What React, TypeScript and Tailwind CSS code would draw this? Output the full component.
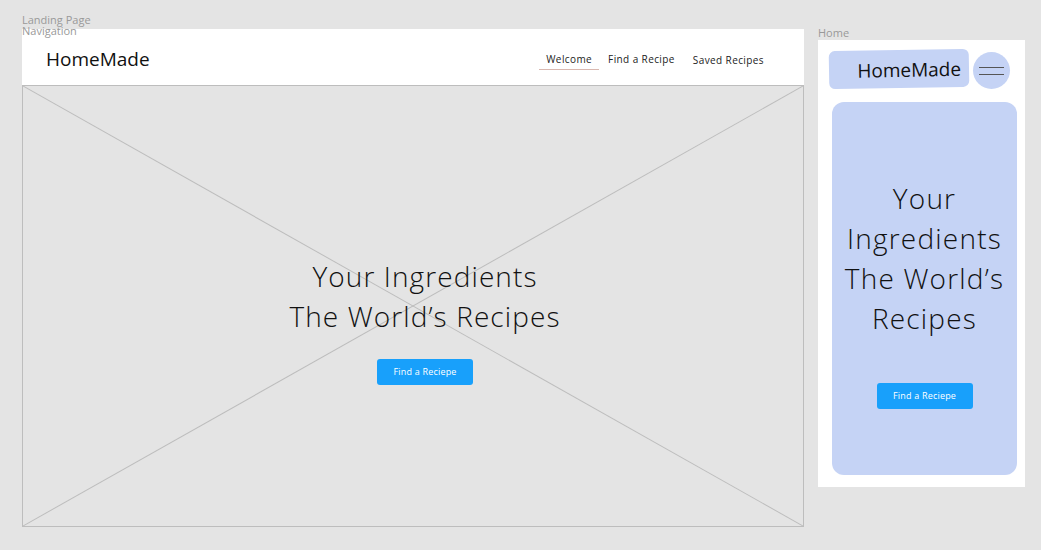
import React from 'react'

const font = { fontFamily: '"Open Sans", "Liberation Sans", sans-serif' }

function FindButton() {
  return (
    <button className="flex h-[26px] w-[96px] items-center justify-center rounded-[3px] bg-[#18a0fb] text-[9px] tracking-[0.2px] text-white">
      Find a Reciepe
    </button>
  )
}

function Desktop() {
  return (
    <div className="flex w-[782px] flex-col">
      <div className="flex h-[56px] items-center justify-between bg-white pl-[24px] pr-[40px]">
        <span className="pt-[4px] text-[19px] text-[#111]">HomeMade</span>
        <nav className="flex items-center text-[10px] tracking-[0.4px] text-[#222]">
          <span className="border-b border-[#d9b8b0] px-[7px] pb-[2px] pt-[7px]">Welcome</span>
          <span className="ml-[9px] pt-[4px]">Find a Recipe</span>
          <span className="ml-[18px] pt-[6px]">Saved Recipes</span>
        </nav>
      </div>
      <div className="relative flex h-[442px] flex-col items-center border border-[#bdbdbd] bg-[#e4e4e4] pl-[24px] pt-[170px]">
        <svg className="absolute inset-0 h-full w-full" preserveAspectRatio="none" viewBox="0 0 100 100">
          <line x1="0" y1="0" x2="100" y2="100" stroke="#bdbdbd" strokeWidth="1" vectorEffect="non-scaling-stroke" />
          <line x1="100" y1="0" x2="0" y2="100" stroke="#bdbdbd" strokeWidth="1" vectorEffect="non-scaling-stroke" />
        </svg>
        <h1 className="relative text-center text-[28px] font-light leading-[40px] tracking-[1.1px] text-[#111]">
          Your Ingredients
          <br />
          The World’s Recipes
        </h1>
        <div className="relative mt-[23px]">
          <FindButton />
        </div>
      </div>
    </div>
  )
}

function Mobile() {
  return (
    <div className="flex w-[207px] flex-col bg-white pb-[12px] pl-[11px] pr-[8px] pt-[9px]">
      <div className="flex items-center gap-[4px]">
        <div className="flex h-[38px] w-[140px] -rotate-1 items-center justify-end rounded-[6px] bg-[#c5d3f5] pr-[8px] pt-[2px] text-[19px] text-[#111]">
          HomeMade
        </div>
        <div className="mt-[3px] flex h-[37px] w-[37px] flex-col items-center justify-center gap-[6px] rounded-full bg-[#c5d3f5]">
          <span className="block h-px w-[25px] bg-[#555]" />
          <span className="block h-px w-[25px] bg-[#555]" />
        </div>
      </div>
      <div className="ml-[3px] mt-[13px] flex h-[373px] w-[185px] flex-col items-center rounded-[12px] bg-[#c5d3f5] pt-[76px]">
        <h2 className="text-center text-[28px] font-light leading-[40px] tracking-[1.2px] text-[#111]">
          Your
          <br />
          Ingredients
          <br />
          The World’s
          <br />
          Recipes
        </h2>
        <div className="mt-[45px]">
          <FindButton />
        </div>
      </div>
    </div>
  )
}

export default function App() {
  return (
    <div className="h-[550px] w-[1041px] bg-[#e4e4e4] pl-[22px] pt-[14px]" style={font}>
      <div className="flex items-start gap-[14px]">
        <div className="flex flex-col">
          <div className="text-[11px] leading-[11px] text-[#999]">Landing Page</div>
          <div className="relative z-10 text-[11px] leading-[11px] text-[#999]">Navigation</div>
          <div className="-mt-[7px]">
            <Desktop />
          </div>
        </div>
        <div className="mt-[11px] flex flex-col">
          <div className="text-[11px] leading-[15px] text-[#999]">Home</div>
          <Mobile />
        </div>
      </div>
    </div>
  )
}
